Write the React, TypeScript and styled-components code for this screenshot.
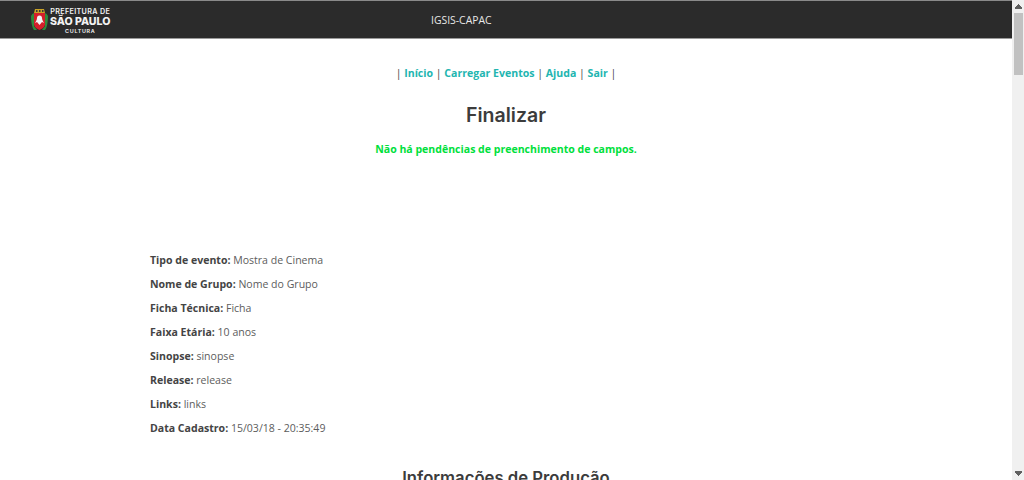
import { createGlobalStyle, styled } from "styled-components";

const GlobalStyle = createGlobalStyle`
  html, body {
    margin: 0;
    padding: 0;
    height: 100%;
    overflow: hidden;
    background: #fff;
  }
`;

const Page = styled.div`
  display: flex;
  height: 100vh;
  overflow: hidden;
  font-family: "Open Sans", "Noto Sans", sans-serif;
  font-size: 10.55px;
  color: #5c5c5c;
`;

const Viewport = styled.div`
  flex: 1;
  min-width: 0;
  overflow: hidden;
`;

const Topbar = styled.header`
  height: 37px;
  display: grid;
  grid-template-columns: 1fr 1fr;
  background: #2b2b2b;
  border-top: 1px solid #8a8a8a;
  border-bottom: 1px solid #9a9a9a;
`;

const Brand = styled.div`
  display: flex;
  align-items: center;
  gap: 2px;
  padding-left: 31px;
`;

const BrandText = styled.div`
  display: flex;
  flex-direction: column;
  align-items: center;
  gap: 1px;
  padding-top: 2px;
  color: #f2f2f2;
  font-family: "Inter", sans-serif;
  line-height: 1;
`;

const BrandTop = styled.span`
  font-size: 7.2px;
  line-height: 7px;
  font-weight: 600;
  letter-spacing: 0.35px;
`;

const BrandMain = styled.span`
  font-size: 10.6px;
  line-height: 11px;
  font-weight: 800;
`;

const BrandSub = styled.span`
  font-size: 5.4px;
  line-height: 6px;
  font-weight: 600;
  letter-spacing: 0.7px;
`;

const SiteName = styled.div`
  display: flex;
  align-items: center;
  margin-left: -75px;
  color: #e8e8e8;
  font-size: 10.4px;
`;

const Content = styled.main`
  display: flex;
  flex-direction: column;
  padding: 26px 150px 0;
`;

const Nav = styled.nav`
  text-align: center;
  line-height: 17px;
  color: #444;
`;

const NavLink = styled.a`
  color: #22b5b0;
  font-weight: 700;
`;

const Title = styled.h1`
  margin: 20px 0 0;
  text-align: center;
  font-family: "Inter", sans-serif;
  font-size: 19.5px;
  line-height: 27px;
  font-weight: 600;
  color: #3c3c3c;
`;

const Status = styled.p`
  margin: 12px 0 0;
  text-align: center;
  font-weight: 700;
  line-height: 16px;
  color: #00e03c;
`;

const Details = styled.div`
  display: flex;
  flex-direction: column;
  margin-top: 91px;
`;

const Row = styled.p`
  margin: 0;
  line-height: 24px;
  b {
    font-weight: 700;
    color: #444;
  }
`;

const SectionTitle = styled.h2`
  margin: 27px 0 0;
  text-align: center;
  font-family: "Inter", sans-serif;
  font-size: 16.7px;
  line-height: 23px;
  font-weight: 600;
  color: #3c3c3c;
`;

const ScrollTrack = styled.aside`
  width: 12px;
  flex: none;
  display: flex;
  flex-direction: column;
  align-items: center;
  background: #f0f0f0;
`;

const ScrollArrow = styled.div<{ $down?: boolean }>`
  flex: none;
  height: 13px;
  display: flex;
  align-items: center;
  justify-content: center;
  color: #606060;
  margin-top: ${(p) => (p.$down ? "auto" : "0")};
`;

const ScrollThumb = styled.div`
  width: 9px;
  height: 62px;
  background: #c1c1c1;
`;

const Crest = () => (
  <svg width="17" height="22" viewBox="0 0 17 22">
    <path d="M4 0h9l1 4H3z" fill="#c9a227" />
    <rect x="5" y="1" width="1.500" height="2" fill="#3a3a3a" />
    <rect x="8" y="1" width="1.500" height="2" fill="#3a3a3a" />
    <rect x="11" y="1" width="1.500" height="2" fill="#3a3a3a" />
    <path d="M0 7c1-2 2-3 4-3l-1 13 3 4H3C1 19 0 12 0 7zM17 7c-1-2-2-3-4-3l1 13-3 4h3c2-2 3-9 3-14z" fill="#2f8a3c" />
    <path d="M3 4h11v11c0 3-3 5-5.500 6C6 20 3 18 3 15z" fill="#d3202a" />
    <path d="M6 9a2.500 2.500 0 0 1 5 0c0 2 1 3 2 5l-2-1-2.500 3L6 13l-2 1c1-2 2-3 2-5z" fill="#f4f4f4" />
  </svg>
);

const fields: [string, string][] = [
  ["Tipo de evento:", "Mostra de Cinema"],
  ["Nome de Grupo:", "Nome do Grupo"],
  ["Ficha Técnica:", "Ficha"],
  ["Faixa Etária:", "10 anos"],
  ["Sinopse:", "sinopse"],
  ["Release:", "release"],
  ["Links:", "links"],
  ["Data Cadastro:", "15/03/18 - 20:35:49"],
];

export default function App() {
  return (
    <Page>
      <GlobalStyle />
      <Viewport>
        <Topbar>
          <Brand>
            <Crest />
            <BrandText>
              <BrandTop>PREFEITURA DE</BrandTop>
              <BrandMain>SÃO PAULO</BrandMain>
              <BrandSub>CULTURA</BrandSub>
            </BrandText>
          </Brand>
          <SiteName>IGSIS-CAPAC</SiteName>
        </Topbar>
        <Content>
          <Nav>
            | <NavLink>Início</NavLink> | <NavLink>Carregar Eventos</NavLink> |{" "}
            <NavLink>Ajuda</NavLink> | <NavLink>Sair</NavLink> |
          </Nav>
          <Title>Finalizar</Title>
          <Status>Não há pendências de preenchimento de campos.</Status>
          <Details>
            {fields.map(([label, value]) => (
              <Row key={label}>
                <b>{label}</b> {value}
              </Row>
            ))}
          </Details>
          <SectionTitle>Informações de Produção</SectionTitle>
        </Content>
      </Viewport>
      <ScrollTrack>
        <ScrollArrow>
          <svg width="7" height="5" viewBox="0 0 7 5">
            <path d="M3 0h1v1h1v1h1v1h1v2H0V3h1V2h1V1h1z" fill="currentColor" />
          </svg>
        </ScrollArrow>
        <ScrollThumb />
        <ScrollArrow $down>
          <svg width="7" height="5" viewBox="0 0 7 5">
            <path d="M0 0h7v2H6v1H5v1H4v1H3V4H2V3H1V2H0z" fill="currentColor" />
          </svg>
        </ScrollArrow>
      </ScrollTrack>
    </Page>
  );
}
